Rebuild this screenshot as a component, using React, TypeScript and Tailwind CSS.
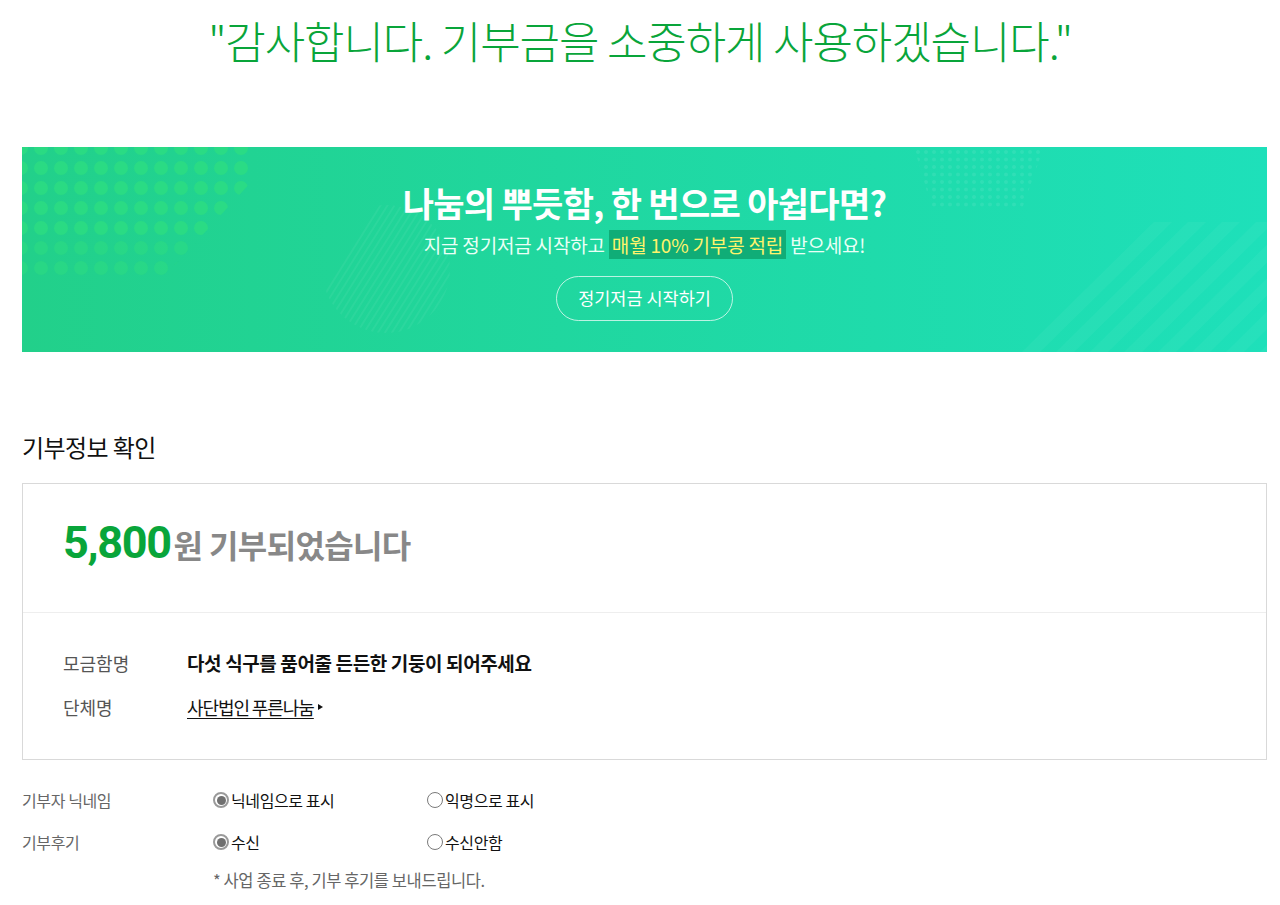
const font = "font-['Noto_Sans_CJK_KR','Noto_Sans',sans-serif]";

const bigDots: { x: number; y: number }[] = [];
for (let j = -1; j < 7; j++) {
  for (let k = -1; k < 12; k++) {
    bigDots.push({ x: 19 + k * 20, y: 21 + j * 20 });
  }
}

const smallDots: { x: number; y: number }[] = [];
for (let j = 0; j < 8; j++) {
  for (let k = 0; k < 17; k++) {
    smallDots.push({ x: 896 + k * 8, y: 5 + j * 7.5 });
  }
}

function BannerDecor() {
  return (
    <svg className="absolute inset-0 pointer-events-none" width="100%" height="100%">
      <defs>
        <clipPath id="dotClip">
          <polygon points="0,0 232,0 232,32 140,132 0,132" />
        </clipPath>
        <clipPath id="smallDotClip">
          <polygon points="892,0 1022,0 1000,62 910,62" />
        </clipPath>
        <clipPath id="circleClip">
          <circle cx="364" cy="122" r="64" />
        </clipPath>
      </defs>
      <g clipPath="url(#dotClip)">
        {bigDots.map((d, i) => (
          <circle key={i} cx={d.x} cy={d.y} r="7" fill="#2ddd80" opacity={d.y > 100 ? 0.5 : 0.75} />
        ))}
      </g>
      <g clipPath="url(#smallDotClip)">
        {smallDots.map((d, i) => (
          <circle key={i} cx={d.x} cy={d.y} r="2" fill="#ffffff" opacity="0.08" />
        ))}
      </g>
      <g clipPath="url(#circleClip)">
        {Array.from({ length: 30 }).map((_, i) => (
          <line key={i} x1={270 + i * 7} y1="200" x2={370 + i * 7} y2="40" stroke="#ffffff" strokeOpacity="0.05" strokeWidth="2" />
        ))}
      </g>
      {Array.from({ length: 8 }).map((_, i) => (
        <polygon
          key={i}
          points={`${1000 + i * 34},205 ${1018 + i * 34},205 ${1150 + i * 34},75 ${1132 + i * 34},75`}
          fill="#ffffff"
          opacity="0.04"
        />
      ))}
    </svg>
  );
}

function Radio({ checked, label }: { checked?: boolean; label: string }) {
  return (
    <label className="flex items-center">
      <span
        className={
          checked
            ? "shrink-0 w-[16px] h-[16px] rounded-full border-2 border-[#9a9a9a] flex items-center justify-center"
            : "shrink-0 w-[16px] h-[16px] rounded-full border border-[#7a7a7a]"
        }
      >
        {checked && <span className="w-[9px] h-[9px] rounded-full bg-[#707070]" />}
      </span>
      <span className="ml-[2px] text-[16px] text-[#111] tracking-tight">{label}</span>
    </label>
  );
}

export default function App() {
  return (
    <div className={`${font} bg-white w-[1280px] min-h-[905px]`}>
      <h1 className="pt-[10px] text-center text-[44px] leading-[60px] font-light tracking-tight text-[#09a53a]">
        "감사합니다. 기부금을 소중하게 사용하겠습니다."
      </h1>

      <div className="pl-[22px] pr-[13px]">
        {/* 정기저금 배너 */}
        <div className="relative mt-[77px] h-[205px] bg-gradient-to-r from-[#22d08a] to-[#1ee0ba] overflow-hidden">
          <BannerDecor />
          <div className="relative flex flex-col items-center pt-[35px]">
            <p className="text-[34px] leading-[42px] font-bold text-white tracking-[-0.02em]">
              나눔의 뿌듯함, 한 번으로 아쉽다면?
            </p>
            <p className="mt-[7px] text-[19px] leading-[27px] text-[#eafff6] tracking-[-0.01em]">
              지금 정기저금 시작하고{" "}
              <span className="bg-[#10ad77] text-[#fff36b] px-[3px] py-[1px]">매월 10% 기부콩 적립</span>{" "}
              받으세요!
            </p>
            <button className="mt-[18px] h-[45px] w-[177px] rounded-full border border-white/70 text-white text-[17.5px]">
              정기저금 시작하기
            </button>
          </div>
        </div>

        {/* 기부정보 */}
        <h2 className="mt-[80px] text-[24px] leading-[30px] text-[#111] tracking-tight">기부정보 확인</h2>

        <div className="mt-[21px] border border-[#d9d9d9]">
          <div className="h-[128px] flex items-baseline pl-[40px] pt-[36px]">
            <span className="font-['Roboto',sans-serif] text-[45px] font-bold text-[#09a53a] tracking-[-0.03em] leading-none">
              5,800
            </span>
            <span className="ml-[3px] text-[32px] font-bold text-[#888] tracking-[-0.02em] leading-none">
              원 기부되었습니다
            </span>
          </div>
          <div className="border-t border-[#eeeeee] pt-[37px] pb-[39px] pl-[40px] flex flex-col gap-[18px] text-[18px] leading-[26px]">
            <div className="flex">
              <span className="w-[124px] text-[#555]">모금함명</span>
              <span className="text-[19px] font-bold text-[#111] tracking-[-0.02em]">다섯 식구를 품어줄 든든한 기둥이 되어주세요</span>
            </div>
            <div className="flex items-center">
              <span className="w-[124px] text-[#555]">단체명</span>
              <span className="text-[#111] underline underline-offset-[3px] tracking-[-0.06em]">사단법인 푸른나눔</span>
              <span className="ml-[4px] w-0 h-0 border-y-[3.5px] border-y-transparent border-l-[5px] border-l-[#111]" />
            </div>
          </div>
        </div>

        {/* 옵션 */}
        <div className="mt-[28px] flex flex-col gap-[18px] leading-[24px]">
          <div className="flex items-center">
            <span className="w-[191px] text-[16px] text-[#666] tracking-tight">기부자 닉네임</span>
            <div className="w-[214px]">
              <Radio checked label="닉네임으로 표시" />
            </div>
            <Radio label="익명으로 표시" />
          </div>
          <div className="flex items-center">
            <span className="w-[191px] text-[16px] text-[#666] tracking-tight">기부후기</span>
            <div className="w-[214px]">
              <Radio checked label="수신" />
            </div>
            <Radio label="수신안함" />
          </div>
        </div>
        <p className="mt-[14px] ml-[191px] text-[16.5px] leading-[24px] text-[#666] tracking-tight">
          * 사업 종료 후, 기부 후기를 보내드립니다.
        </p>
      </div>
    </div>
  );
}
